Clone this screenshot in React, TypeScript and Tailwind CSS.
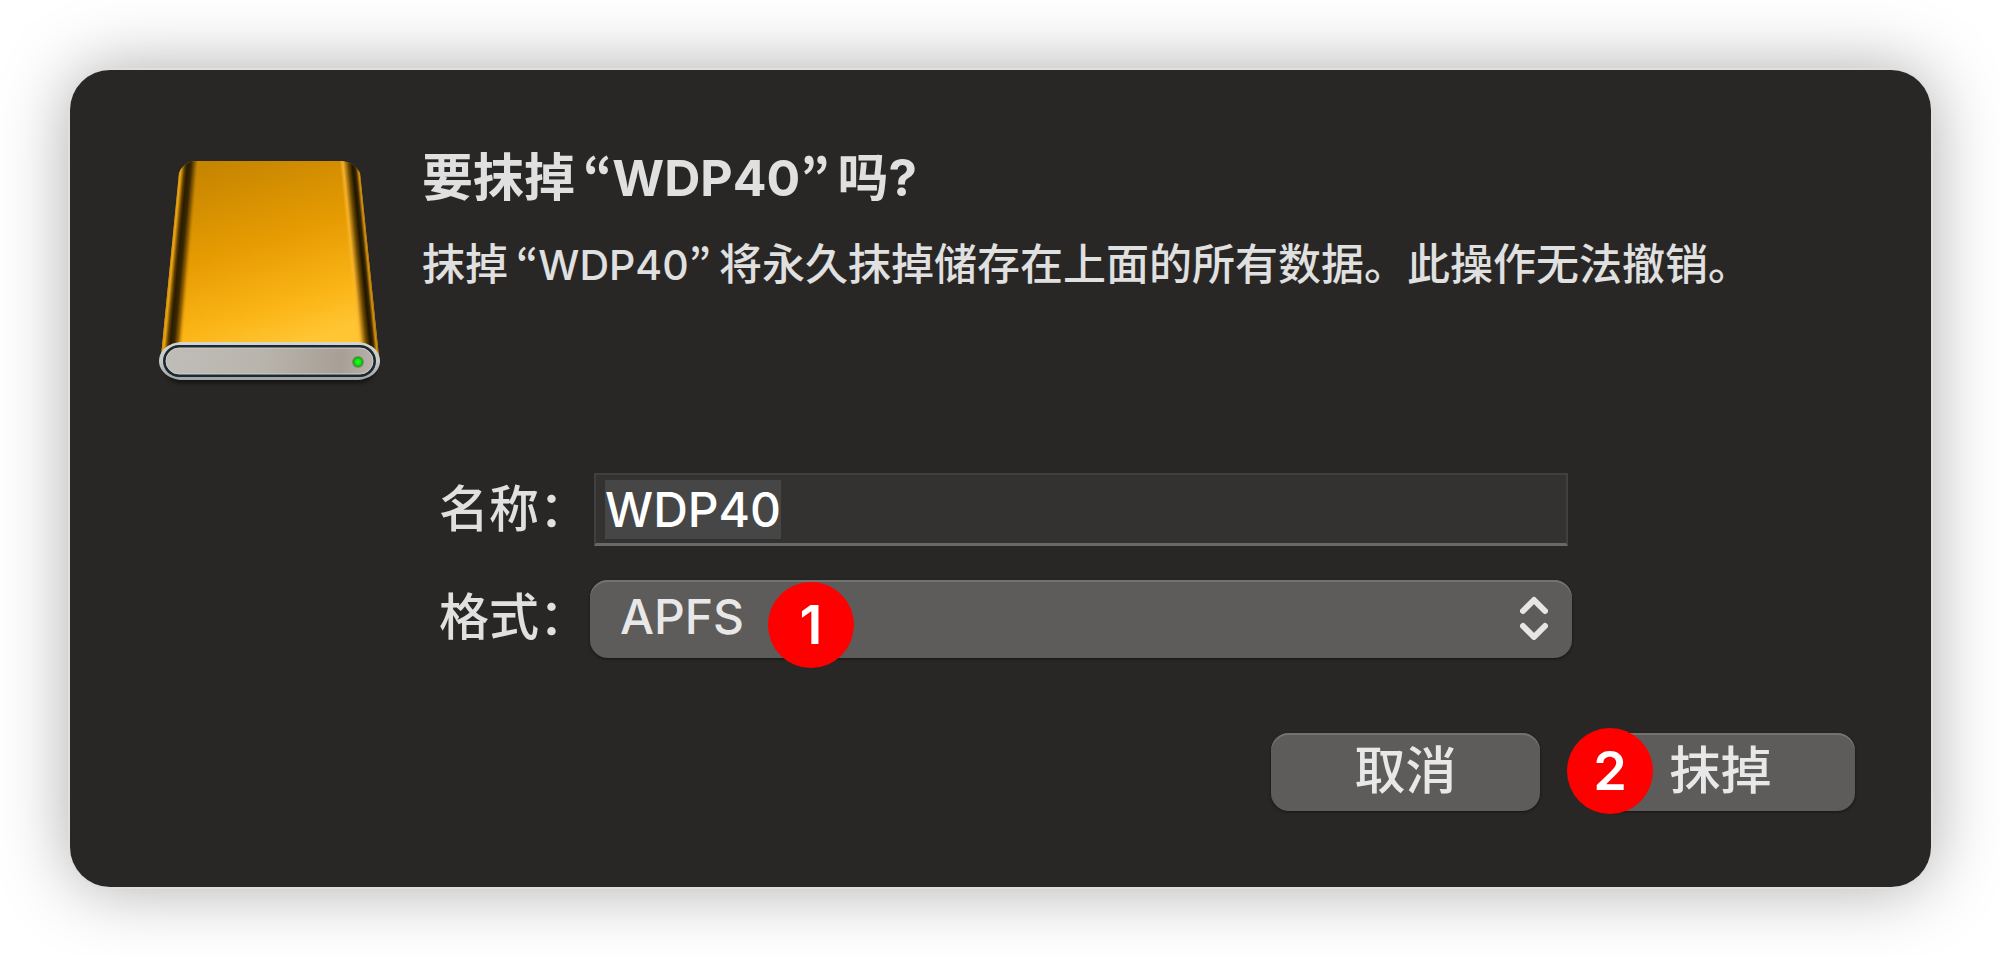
import { useEffect, useRef, type ReactNode } from 'react'

function DiskIcon() {
  return (
    <svg className="w-[224px] shrink-0" viewBox="0 0 224 226" fill="none" aria-hidden="true">
      <defs>
        <linearGradient id="face" x1="70" y1="0" x2="125" y2="185" gradientUnits="userSpaceOnUse">
          <stop offset="0" stopColor="#c78600" />
          <stop offset="0.45" stopColor="#e69b02" />
          <stop offset="0.8" stopColor="#fbb516" />
          <stop offset="1" stopColor="#ffc533" />
        </linearGradient>
        <linearGradient id="leftEdge" x1="12" y1="92" x2="33" y2="94" gradientUnits="userSpaceOnUse">
          <stop offset="0" stopColor="#b87e0a" />
          <stop offset="0.14" stopColor="#f0a514" />
          <stop offset="0.3" stopColor="#5e4000" />
          <stop offset="0.42" stopColor="#2a1c00" />
          <stop offset="0.6" stopColor="#3a2700" />
          <stop offset="0.8" stopColor="#9a6700" />
          <stop offset="1" stopColor="#e09600" stopOpacity="0" />
        </linearGradient>
        <linearGradient id="rightEdge" x1="191" y1="94" x2="211" y2="92" gradientUnits="userSpaceOnUse">
          <stop offset="0" stopColor="#ffc233" stopOpacity="0" />
          <stop offset="0.16" stopColor="#f5b028" />
          <stop offset="0.42" stopColor="#6b4a00" />
          <stop offset="0.62" stopColor="#1f1500" />
          <stop offset="0.76" stopColor="#3a2700" />
          <stop offset="0.9" stopColor="#d9940f" />
          <stop offset="1" stopColor="#8a5c00" />
        </linearGradient>
        <linearGradient id="front" x1="8" y1="190" x2="214" y2="210" gradientUnits="userSpaceOnUse">
          <stop offset="0" stopColor="#bfbdb8" />
          <stop offset="0.45" stopColor="#b9b5ad" />
          <stop offset="0.85" stopColor="#a89f96" />
          <stop offset="1" stopColor="#b8b1a9" />
        </linearGradient>
        <linearGradient id="rim" x1="0" y1="181" x2="0" y2="219" gradientUnits="userSpaceOnUse">
          <stop offset="0" stopColor="#d3d5d1" />
          <stop offset="0.5" stopColor="#c4c9ca" />
          <stop offset="1" stopColor="#9da4a6" />
        </linearGradient>
        <radialGradient id="led">
          <stop offset="0" stopColor="#2bff2b" />
          <stop offset="0.6" stopColor="#0be30b" />
          <stop offset="1" stopColor="#169416" />
        </radialGradient>
        <filter id="soft" x="-10%" y="-50%" width="120%" height="220%">
          <feGaussianBlur stdDeviation="2" />
        </filter>
      </defs>
      <rect x="6" y="188" width="212" height="34" rx="17" fill="#000" opacity="0.5" filter="url(#soft)" />
      <path d="M36 0H184Q196 1 202 12L221 196H3L21 12Q25 2 36 0Z" fill="url(#face)" />
      <path d="M36 0Q25 2 21 12L3 196H28L46 0Z" fill="url(#leftEdge)" />
      <path d="M176 0H184Q196 1 202 12L221 196H194Z" fill="url(#rightEdge)" />
      <path d="M25 181H198C213 181 222 190 222 200C222 211 211 219 198 219H25C12 219 1 211 1 200C1 190 10 181 25 181Z" fill="url(#rim)" />
      <rect x="5" y="184" width="213" height="32" rx="16" fill="#1d2830" />
      <rect x="8" y="187" width="207" height="26" rx="13" fill="url(#front)" stroke="#cfcfcb" strokeWidth="1" />
      <circle cx="200" cy="201" r="6" fill="#5d7a58" opacity="0.6" />
      <circle cx="200" cy="201" r="5" fill="url(#led)" />
    </svg>
  )
}

function Quoted({ className, children }: { className: string; children: ReactNode }) {
  return (
    <span className="mx-2 leading-none">
      <span className="font-['Noto_Sans_CJK_KR',sans-serif]">“</span>
      <span className={className}>{children}</span>
      <span className="font-['Noto_Sans_CJK_KR',sans-serif]">”</span>
    </span>
  )
}

function StepBadge({ className, children }: { className: string; children: ReactNode }) {
  return (
    <span
      className={`pointer-events-none absolute flex size-[86px] items-center justify-center rounded-full bg-[#ff0000] text-[54px] font-semibold leading-none text-white ${className}`}
    >
      {children}
    </span>
  )
}

function UpDownIcon() {
  return (
    <svg
      className="pointer-events-none absolute right-6 top-4 h-11 w-7"
      viewBox="0 0 28 44"
      fill="none"
      stroke="#e6e6e6"
      strokeWidth="6"
      strokeLinecap="round"
      strokeLinejoin="round"
      aria-hidden="true"
    >
      <path d="M3 15L14 4L25 15" />
      <path d="M3 30L14 41L25 30" />
    </svg>
  )
}

const buttonClass =
  'h-[78px] w-[269px] rounded-[18px] bg-[#5d5c5a] pb-1 text-[51px] font-medium leading-none text-[#e8e8e8] shadow-[inset_0_2px_0_#73726f,0_1px_3px_rgba(0,0,0,0.5)]'

export default function App() {
  const nameRef = useRef<HTMLInputElement>(null)

  useEffect(() => {
    nameRef.current?.focus()
    nameRef.current?.select()
  }, [])

  return (
    <div className="min-h-screen bg-white p-[70px] pr-[69px] pb-[69px] font-[Inter,'Noto_Sans_CJK_SC',sans-serif] text-[#e0e0e0]">
      <form
        role="dialog"
        aria-labelledby="dialog-title"
        onSubmit={(e) => e.preventDefault()}
        className="rounded-[40px] bg-[#282725] pt-[75px] pr-[76px] pb-[76px] pl-[88px] shadow-[0_0_0_2px_#dfdfdf,0_0_70px_rgba(0,0,0,0.34)]"
      >
        <div className="flex items-start gap-10">
          <div className="pt-4">
            <DiskIcon />
          </div>
          <div>
            <h1 id="dialog-title" className="text-[51px] font-bold leading-[66px]">
              要抹掉<Quoted className="text-[50px]">WDP40</Quoted>吗?
            </h1>
            <p className="mt-6 text-[43px] font-medium leading-[58px]">
              抹掉<Quoted className="text-[41px]">WDP40</Quoted>将永久抹掉储存在上面的所有数据。此操作无法撤销。
            </p>
          </div>
        </div>

        <div className="mt-[86px] mr-[283px] ml-[281px] grid grid-cols-[auto_1fr] gap-y-[34px]">
          <label htmlFor="name" className="w-[151px] text-[50px] font-medium leading-[73px]">
            名称：
          </label>
          <input
            id="name"
            ref={nameRef}
            defaultValue="WDP40"
            className="mx-1 h-[73px] min-w-0 border-2 border-b-[3px] border-[#41403e] border-b-[#6a6967] bg-[#333230] px-[9px] text-[48px] font-medium leading-[62px] text-white outline-none selection:bg-[#464646] selection:text-white"
          />
          <label htmlFor="format" className="text-[50px] font-medium leading-[74px]">
            格式：
          </label>
          <div className="relative">
            <select
              id="format"
              className="block h-[78px] w-full appearance-none rounded-[18px] bg-[#5d5c5a] pb-1 pl-[30px] text-[48px] font-medium text-[#e8e8e8] shadow-[inset_0_2px_0_#73726f,0_1px_3px_rgba(0,0,0,0.5)] outline-none"
            >
              <option>APFS</option>
            </select>
            <UpDownIcon />
            <StepBadge className="left-[178px] top-[2px]">1</StepBadge>
          </div>
        </div>

        <div className="mt-[75px] flex justify-end gap-[46px]">
          <button type="button" className={buttonClass}>
            取消
          </button>
          <div className="relative">
            <button type="submit" className={buttonClass}>
              抹掉
            </button>
            <StepBadge className="-left-[19px] -top-[5px]">2</StepBadge>
          </div>
        </div>
      </form>
    </div>
  )
}
